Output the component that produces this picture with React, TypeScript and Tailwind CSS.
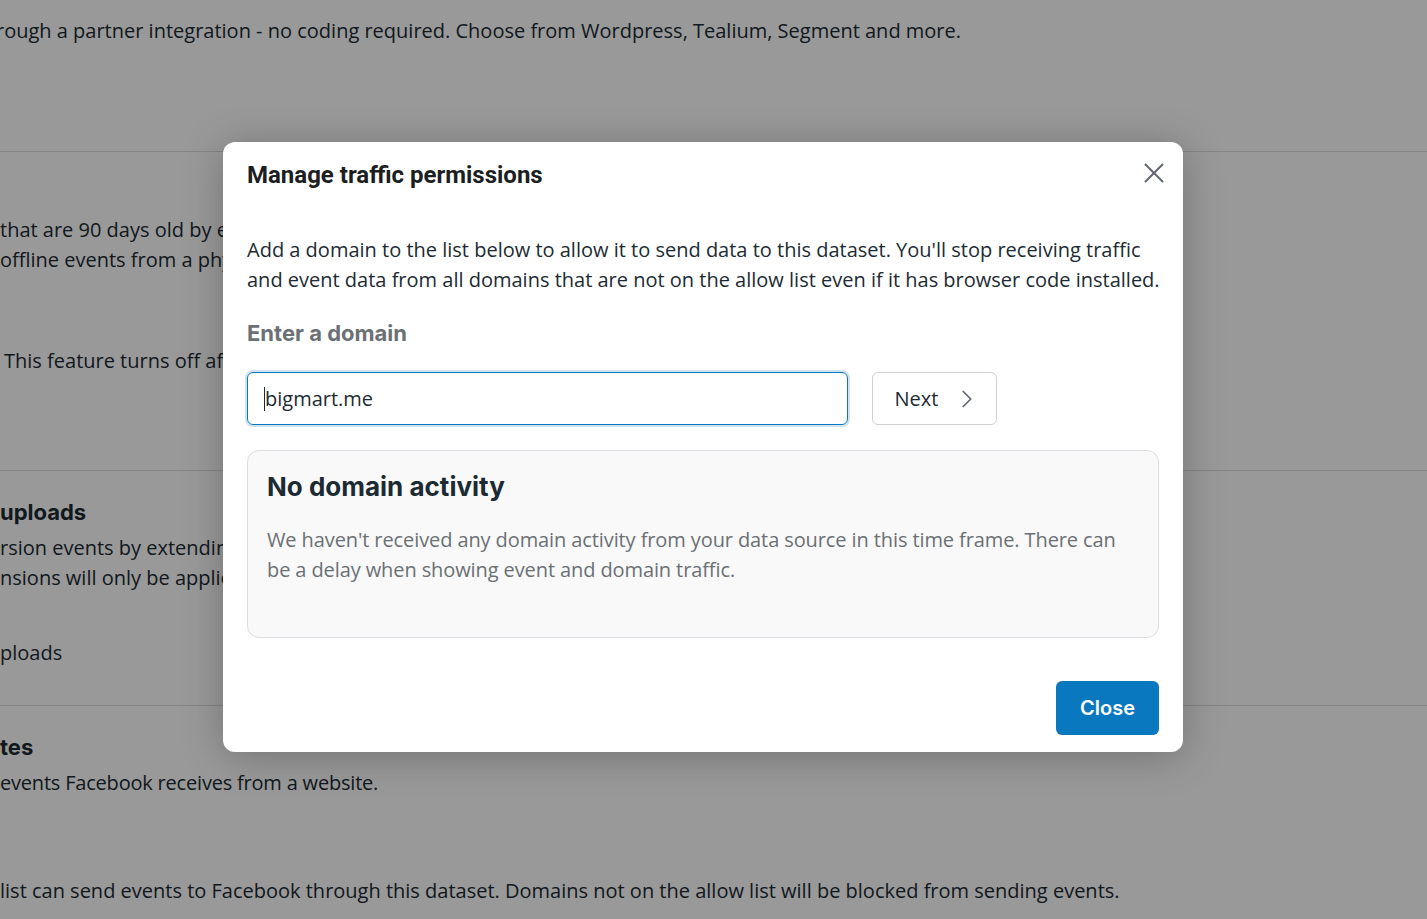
import { X, ChevronRight } from "lucide-react";

const body = { fontFamily: '"Open Sans", "Noto Sans", sans-serif' };
const geo = { fontFamily: 'Inter, "Noto Sans", sans-serif' };

function BackgroundPage() {
    return (
        <div className="w-full h-[919px] bg-white text-[#1c2b33] text-[20px] overflow-hidden" style={body}>
            <div className="h-[152px] border-b border-[#dadde1] pt-[16px]">
                <p className="-ml-[4px] whitespace-nowrap leading-[30px]">rough a partner integration - no coding required. Choose from Wordpress, Tealium, Segment and more.</p>
            </div>
            <div className="h-[319px] border-b border-[#dadde1] pt-[63px]">
                <div className="w-[223px] overflow-hidden">
                    <p className="leading-[30px] whitespace-nowrap">that are 90 days old by each event</p>
                    <p className="leading-[30px] whitespace-nowrap">offline events from a physical store</p>
                    <p className="leading-[30px] whitespace-nowrap mt-[71px] ml-[4px]">This feature turns off after</p>
                </div>
            </div>
            <div className="h-[235px] border-b border-[#dadde1] pt-[26px]">
                <div className="w-[223px] overflow-hidden">
                    <p className="leading-[30px] text-[22px] font-bold whitespace-nowrap" style={geo}>uploads</p>
                    <p className="leading-[30px] whitespace-nowrap mt-[6px]">rsion events by extending</p>
                    <p className="leading-[30px] whitespace-nowrap">nsions will only be applied</p>
                    <p className="leading-[30px] whitespace-nowrap mt-[45px]">ploads</p>
                </div>
            </div>
            <div className="pt-[26px]">
                <p className="leading-[30px] text-[22px] font-bold whitespace-nowrap" style={geo}>tes</p>
                <p className="leading-[30px] whitespace-nowrap mt-[6px] tracking-[-0.2px]">events Facebook receives from a website.</p>
                <p className="leading-[30px] whitespace-nowrap mt-[78px]">list can send events to Facebook through this dataset. Domains not on the allow list will be blocked from sending events.</p>
            </div>
        </div>
    );
}

export default function App() {
    return (
        <div className="relative w-full h-[919px] overflow-hidden">
            <BackgroundPage />

            {/* overlay + dialog */}
            <div className="absolute inset-0 bg-black/40 pl-[223px] pt-[142px]">
                <div className="w-[960px] h-[610px] bg-white rounded-[12px] shadow-[0_4px_40px_rgba(0,0,0,0.25)] px-[24px] pt-[17px] flex flex-col text-[#1c2b33]" style={body}>
                    <div className="flex items-start justify-between">
                        <h2 className="text-[24px] font-bold leading-[32px] text-[#1c1e21]" style={{ fontFamily: 'Roboto, "Noto Sans", sans-serif' }}>
                            Manage traffic permissions
                        </h2>
                        <button className="text-[#606770] mt-[-3px] mr-[-12px]">
                            <X size={34} strokeWidth={1.4} />
                        </button>
                    </div>

                    <p className="mt-[44px] text-[20px] leading-[30px] whitespace-nowrap">
                        Add a domain to the list below to allow it to send data to this dataset. You'll stop receiving traffic
                        <br />
                        and event data from all domains that are not on the allow list even if it has browser code installed.
                    </p>

                    <p className="mt-[23px] text-[22px] font-bold text-[#6b7075] leading-[30px]" style={geo}>Enter a domain</p>

                    <div className="mt-[24px] flex items-center gap-[24px]">
                        <div className="w-[601px] h-[53px] rounded-[6px] border border-[#0a78be] ring-[2px] ring-[#cfe3f3] flex items-center pl-[16px] text-[20px]">
                            <span className="w-[1px] h-[24px] bg-[#1c2b33]" />
                            <span>bigmart.me</span>
                        </div>
                        <button className="w-[125px] h-[53px] rounded-[6px] border border-[#ccd0d5] flex items-center justify-center gap-[14px] pl-[8px] text-[20px] text-[#1c2b33]">
                            Next
                            <ChevronRight size={30} strokeWidth={1.4} className="text-[#606770]" />
                        </button>
                    </div>

                    <div className="mt-[25px] h-[188px] rounded-[12px] border border-[#dadde1] bg-[#f9f9f9] px-[19px] pt-[18px]">
                        <h3 className="text-[26px] font-bold leading-[36px] text-[#1c2b33]" style={geo}>No domain activity</h3>
                        <p className="mt-[20px] text-[20px] leading-[30px] text-[#6b7075] tracking-[-0.1px] whitespace-nowrap">
                            We haven't received any domain activity from your data source in this time frame. There can
                            <br />
                            be a delay when showing event and domain traffic.
                        </p>
                    </div>

                    <div className="mt-[43px] flex justify-end">
                        <button className="w-[103px] h-[54px] rounded-[6px] bg-[#0a78be] text-white text-[20px] font-semibold" style={geo}>
                            Close
                        </button>
                    </div>
                </div>
            </div>
        </div>
    );
}
